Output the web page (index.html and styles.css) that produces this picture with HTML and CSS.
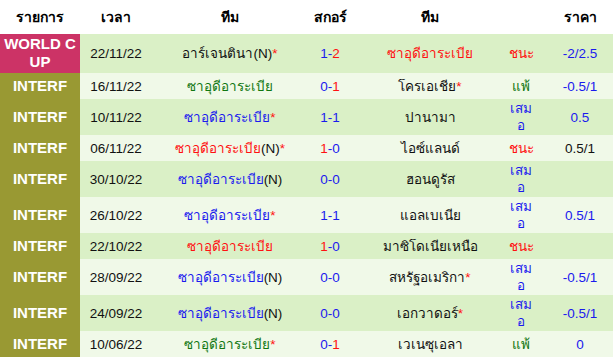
FILE: index.html
```html
<!DOCTYPE html>
<html lang="th">
<head>
<meta charset="utf-8">
<link rel="stylesheet" href="styles.css">
</head>
<body>
<table class="results">
  <colgroup>
    <col class="c-league"><col class="c-time"><col class="c-team"><col class="c-score"><col class="c-team"><col class="c-res"><col class="c-odds">
  </colgroup>
  <thead>
    <tr><th>รายการ</th><th>เวลา</th><th>ทีม</th><th>สกอร์</th><th>ทีม</th><th></th><th class="odds">ราคา</th></tr>
  </thead>
  <tbody>
    <tr class="r-a wc-row">
      <td class="league wc">WORLD C<br>UP</td><td class="date">22/11/22</td>
      <td class="team">อาร์เจนตินา(N)<span class="star">*</span></td>
      <td class="score"><span class="b">1-</span><span class="r">2</span></td>
      <td class="team red">ซาอุดีอาระเบีย</td><td class="res red">ชนะ</td><td class="odds blue">-2/2.5</td>
    </tr>
    <tr class="r-b">
      <td class="league">INTERF</td><td class="date">16/11/22</td>
      <td class="team green">ซาอุดีอาระเบีย</td>
      <td class="score"><span class="b">0-</span><span class="r">1</span></td>
      <td class="team">โครเอเชีย<span class="star">*</span></td><td class="res green">แพ้</td><td class="odds blue">-0.5/1</td>
    </tr>
    <tr class="r-a">
      <td class="league">INTERF</td><td class="date">10/11/22</td>
      <td class="team blue">ซาอุดีอาระเบีย<span class="star">*</span></td>
      <td class="score"><span class="b">1-1</span></td>
      <td class="team">ปานามา</td><td class="res blue">เสม<br>อ</td><td class="odds blue">0.5</td>
    </tr>
    <tr class="r-b">
      <td class="league">INTERF</td><td class="date">06/11/22</td>
      <td class="team"><span class="red">ซาอุดีอาระเบีย</span>(N)<span class="star">*</span></td>
      <td class="score"><span class="r">1</span><span class="b">-0</span></td>
      <td class="team">ไอซ์แลนด์</td><td class="res red">ชนะ</td><td class="odds">0.5/1</td>
    </tr>
    <tr class="r-a">
      <td class="league">INTERF</td><td class="date">30/10/22</td>
      <td class="team"><span class="blue">ซาอุดีอาระเบีย</span>(N)</td>
      <td class="score"><span class="b">0-0</span></td>
      <td class="team">ฮอนดูรัส</td><td class="res blue">เสม<br>อ</td><td class="odds blue"></td>
    </tr>
    <tr class="r-b">
      <td class="league">INTERF</td><td class="date">26/10/22</td>
      <td class="team blue">ซาอุดีอาระเบีย<span class="star">*</span></td>
      <td class="score"><span class="b">1-1</span></td>
      <td class="team">แอลเบเนีย</td><td class="res blue">เสม<br>อ</td><td class="odds blue">0.5/1</td>
    </tr>
    <tr class="r-a">
      <td class="league">INTERF</td><td class="date">22/10/22</td>
      <td class="team red">ซาอุดีอาระเบีย</td>
      <td class="score"><span class="r">1</span><span class="b">-0</span></td>
      <td class="team">มาซิโดเนียเหนือ</td><td class="res red">ชนะ</td><td class="odds blue"></td>
    </tr>
    <tr class="r-b">
      <td class="league">INTERF</td><td class="date">28/09/22</td>
      <td class="team"><span class="blue">ซาอุดีอาระเบีย</span>(N)</td>
      <td class="score"><span class="b">0-0</span></td>
      <td class="team">สหรัฐอเมริกา<span class="star">*</span></td><td class="res blue">เสม<br>อ</td><td class="odds blue">-0.5/1</td>
    </tr>
    <tr class="r-a">
      <td class="league">INTERF</td><td class="date">24/09/22</td>
      <td class="team"><span class="blue">ซาอุดีอาระเบีย</span>(N)</td>
      <td class="score"><span class="b">0-0</span></td>
      <td class="team">เอกวาดอร์<span class="star">*</span></td><td class="res blue">เสม<br>อ</td><td class="odds blue">-0.5/1</td>
    </tr>
    <tr class="r-b">
      <td class="league">INTERF</td><td class="date">10/06/22</td>
      <td class="team green">ซาอุดีอาระเบีย<span class="star">*</span></td>
      <td class="score"><span class="b">0-</span><span class="r">1</span></td>
      <td class="team">เวเนซุเอลา</td><td class="res green">แพ้</td><td class="odds blue">0</td>
    </tr>
  </tbody>
</table>
</body>
</html>
```

FILE: styles.css
```css
html, body {
  margin: 0;
  padding: 0;
  background: #ffffff;
}
body {
  font-family: "Liberation Sans", Arial, "Noto Sans", sans-serif;
  font-size: 13.5px;
  color: #111111;
  overflow: hidden;
}
.results {
  width: 613px;
  border-collapse: collapse;
  border-spacing: 0;
  table-layout: fixed;
}
.c-league { width: 80px; }
.c-time { width: 72px; }
.c-team { width: 156px; }
.c-score { width: 44px; }
.c-res { width: 26px; }
.c-odds { width: 79px; }

.results th {
  height: 34px;
  padding: 0;
  font-weight: bold;
  font-size: 14px;
  color: #000000;
  text-align: center;
  vertical-align: middle;
  background: #ffffff;
}
.results td {
  padding: 1px 0;
  text-align: center;
  vertical-align: middle;
  line-height: 17px;
  height: 24px;
  white-space: nowrap;
}
.r-a td { background: #daf0c6; }
.r-b td { background: #f0f9e8; }

.results td.league {
  background: #999933;
  color: #ffffff;
  font-weight: bold;
  font-size: 15px;
  line-height: 18px;
}
.results td.league.wc {
  background: #cc3366;
  padding: 1px 0 2px;
}
.date { color: #111111; }
.odds { padding-left: 13px !important; }
th.odds { padding-left: 13px; }

.blue, .b { color: #1a1aee; }
.red, .r { color: #ff1111; }
.green { color: #117711; }
.star { color: #ff1111; }
.team { color: #111111; }
.team.blue { color: #1a1aee; }
.team.red { color: #ff1111; }
.team.green { color: #117711; }
```
